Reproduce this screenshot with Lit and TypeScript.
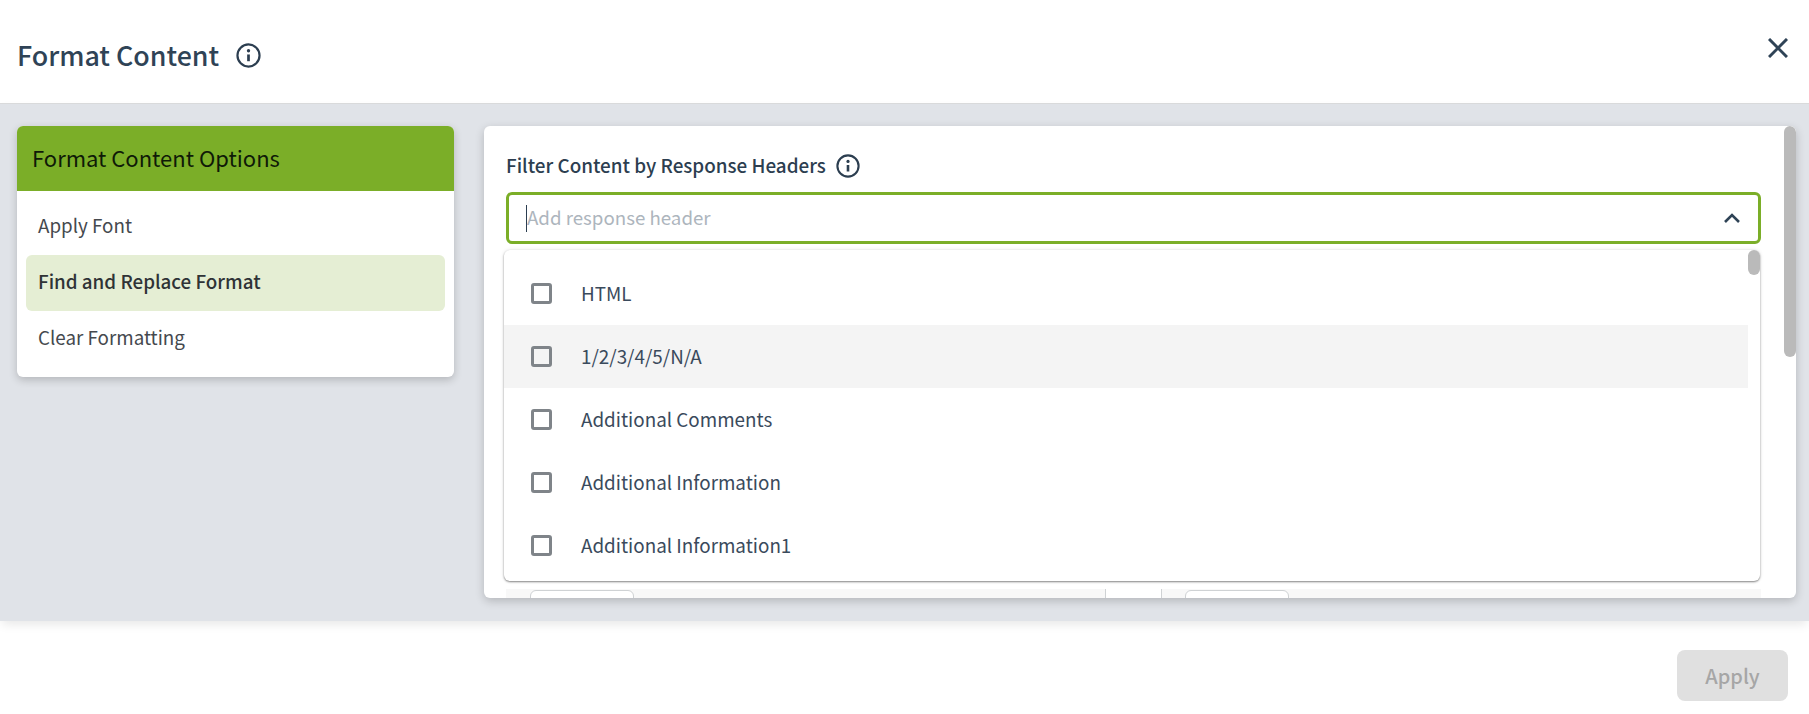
import { LitElement, html, css } from "lit";
import { customElement } from "lit/decorators.js";

const info = (size: number) => html`<svg class="info" width=${size} height=${size} viewBox="0 0 24 24" fill="none" stroke="#2c3e50" stroke-width="2.1">
  <circle cx="12" cy="12" r="10.6"></circle>
  <path d="M12 11v6.5" stroke-width="2.6"></path>
  <circle cx="12" cy="7.4" r="1.6" fill="#2c3e50" stroke="none"></circle>
</svg>`;

const items = ["HTML", "1/2/3/4/5/N/A", "Additional Comments", "Additional Information", "Additional Information1"];

@customElement("app-root")
export class AppRoot extends LitElement {
  static styles = css`
    :host { display: block; width: 1809px; height: 714px; overflow: hidden; background: #fff;
      font-family: "Noto Sans CJK SC", "Noto Sans CJK JP", "Noto Sans", sans-serif; color: #2c3e50; }
    * { box-sizing: border-box; }
    .page { display: flex; flex-direction: column; height: 714px; }
    .top { height: 103px; flex: none; display: flex; align-items: center; padding: 0 17px; gap: 17px; background: #fff; position: relative; }
    .title { font-size: 26.8px; line-height: 36px; font-weight: 500; margin: 7px 0 0; color: #2f4356; }
    .top .info { margin-top: 7px; }
    .close { position: absolute; right: 21px; top: 38px; width: 20px; height: 20px; }
    .body { height: 518px; flex: none; background: #e0e3e8; display: flex; gap: 30px; padding: 22px 13px 0 17px; box-shadow: 0 5px 10px -2px rgba(0,0,0,.1); border-top: 1px solid #d9dadb; position: relative; }
    .side { width: 437px; height: 251px; flex: none; background: #fff; border-radius: 6px; overflow: hidden; box-shadow: 0 3px 8px rgba(0,0,0,.2); }
    .side-head { height: 65px; background: #7bae28; color: #0f1a07; display: flex; align-items: center; padding: 0 0 3px 15px; font-size: 22px; font-weight: 400; line-height: 28px; }
    .side-list { padding: 8px 9px 0; display: flex; flex-direction: column; }
    .side-item { height: 56px; border-radius: 6px; padding: 0 0 4px 12px; display: flex; align-items: center; font-size: 18.8px; color: #45494e; line-height: 24px; }
    .side-item.on { background: #e5eed4; font-weight: 500; color: #2f3336; }
    .main { position: relative; width: 1312px; height: 472px; flex: none; background: #fff; border-radius: 6px; overflow: hidden; box-shadow: 0 3px 10px rgba(0,0,0,.2); padding: 28px 22px 0; }
    .label { display: flex; align-items: center; gap: 10px; font-size: 18.85px; font-weight: 500; line-height: 24px; height: 24px; }
    .label span { margin-top: -2px; }
    .field { margin-top: 14px; height: 52px; width: 1255px; border: 3px solid #7bae28; border-radius: 6px; display: flex; align-items: center; justify-content: space-between; padding: 0 18px 0 17px; font-size: 18.7px; color: #adb5bd; }
    .field span { border-left: 1px solid #2c3e50; line-height: 24px; height: 27px; }
    .under { display: grid; grid-template-columns: 599px 57px 599px; margin-top: 345px; height: 60px; border-right: 1px solid #cfd2d4; width: 1255px; }
    .cell { background: #f8f8f8; padding: 1px 24px; }
    .cell:last-child { padding-left: 23px; }
    .cell.mid { background: #fff; border-left: 1px solid #cfd2d4; border-right: 1px solid #cfd2d4; }
    .cell i { display: block; width: 104px; height: 30px; background: #fff; border: 1px solid #cfd2d4; border-radius: 6px; }
    .dd { position: absolute; left: 20px; top: 124px; width: 1256px; height: 331px; background: #fff; border-radius: 6px; box-shadow: 0 1px 2px rgba(0,0,0,.45), 0 0 4px rgba(0,0,0,.1); padding-top: 12px; }
    .row { height: 63px; width: 1244px; display: flex; align-items: center; padding-left: 27px; gap: 29px; font-size: 18.83px; color: #3a4a5c; }
    .row span:last-child { margin-top: -2px; }
    .row.hover { background: #f4f4f4; }
    .box { width: 21px; height: 21px; border: 3px solid #7f8489; border-radius: 3px; flex: none; }
    .thumb { position: absolute; background: #bababa; border-radius: 6px; width: 12px; }
    .t1 { right: 0; top: 0; height: 231px; }
    .t2 { right: 0; top: 0; height: 25px; }
    .foot { flex: 1; display: flex; justify-content: flex-end; align-items: flex-start; padding: 29px 21px 0 0; background: #fff; }
    .apply { width: 111px; height: 51px; border-radius: 8px; background: #e0e0e0; color: #a6a6a6; border: 0; font: inherit; font-size: 20px; font-weight: 500; display: flex; align-items: center; justify-content: center; }
  `;

  render() {
    return html`<div class="page">
      <div class="top">
        <h1 class="title">Format Content</h1>
        ${info(25)}
        <svg class="close" viewBox="0 0 20 20" fill="none" stroke="#2f4356" stroke-width="3"><path d="M1 1l18 18M19 1L1 19"></path></svg>
      </div>
      <div class="body">
        <div class="side">
          <div class="side-head">Format Content Options</div>
          <div class="side-list">
            <div class="side-item">Apply Font</div>
            <div class="side-item on">Find and Replace Format</div>
            <div class="side-item">Clear Formatting</div>
          </div>
        </div>
        <div class="main">
          <div class="label"><span>Filter Content by Response Headers</span> ${info(24)}</div>
          <div class="field"><span>Add response header</span>
            <svg width="16" height="10" viewBox="0 0 16 10" fill="none" stroke="#2f4356" stroke-width="2.6"><path d="M1 9l7-7 7 7"></path></svg>
          </div>
          <div class="under">
            <div class="cell"><i></i></div>
            <div class="cell mid"></div>
            <div class="cell"><i></i></div>
          </div>
          <div class="dd">
            ${items.map((t, i) => html`<div class="row ${i === 1 ? "hover" : ""}"><span class="box"></span><span>${t}</span></div>`)}
            <div class="thumb t2"></div>
          </div>
          <div class="thumb t1"></div>
        </div>
      </div>
      <div class="foot"><button class="apply">Apply</button></div>
    </div>`;
  }
}
